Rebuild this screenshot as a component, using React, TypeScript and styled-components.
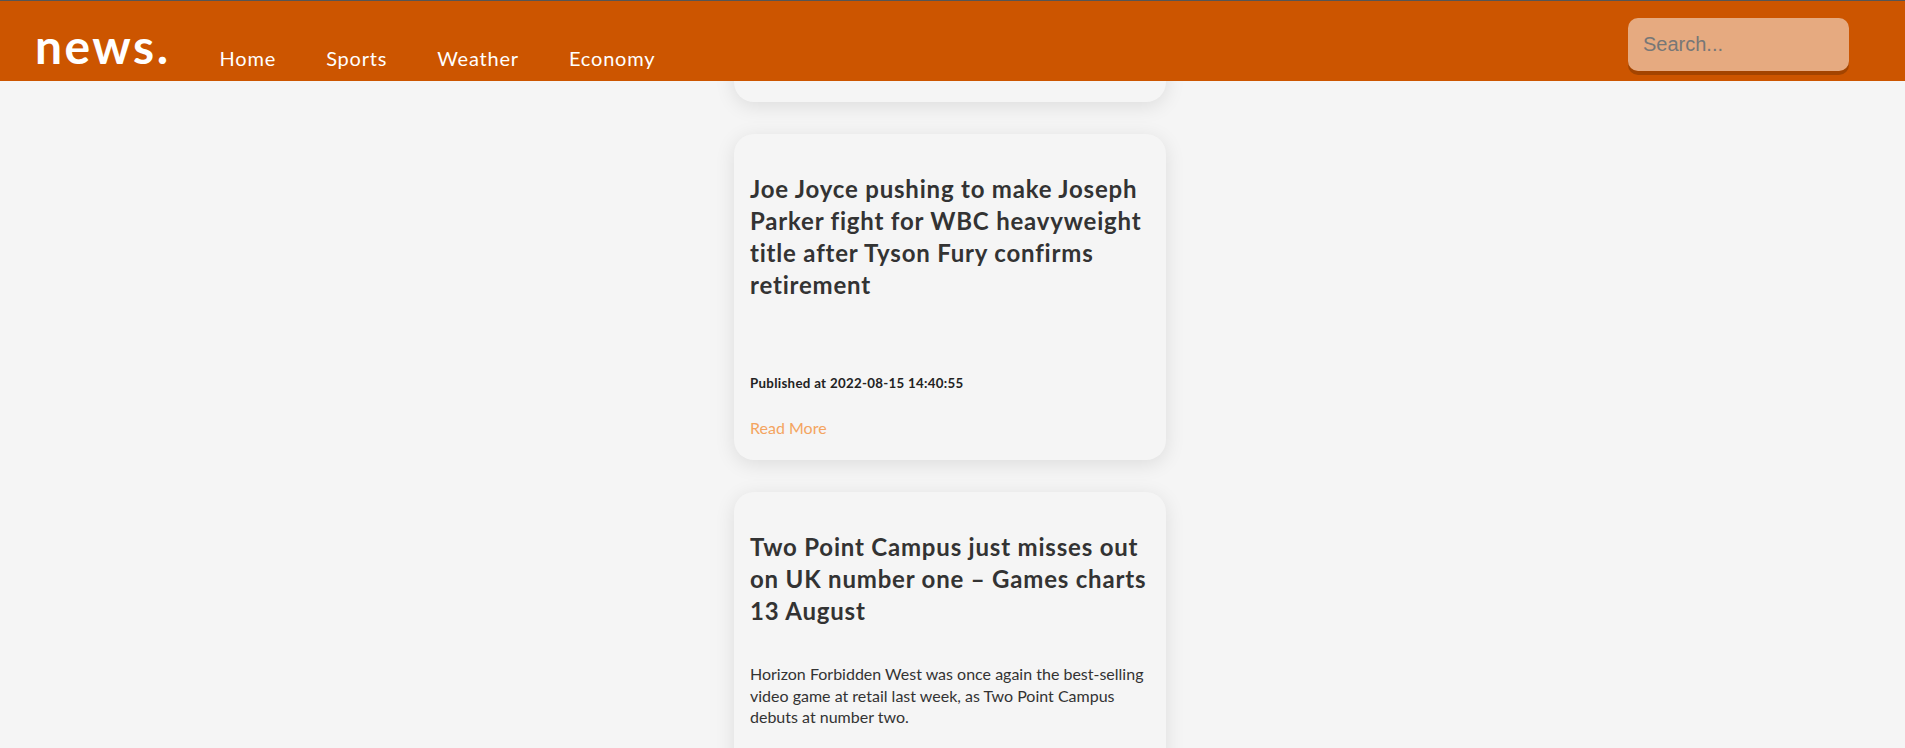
import { useLayoutEffect, useRef } from "react";
import styled, { createGlobalStyle } from "styled-components";

type Article = {
  title: string;
  description: string;
  publishedAt: string;
};

const articles: Article[] = [
  {
    title: "Ethereum developers confirm date for the long awaited Merge upgrade",
    description: "",
    publishedAt: "2022-08-15 15:02:11",
  },
  {
    title:
      "Joe Joyce pushing to make Joseph Parker fight for WBC heavyweight title after Tyson Fury confirms retirement",
    description: "",
    publishedAt: "2022-08-15 14:40:55",
  },
  {
    title: "Two Point Campus just misses out on UK number one – Games charts 13 August",
    description:
      "Horizon Forbidden West was once again the best-selling video game at retail last week, as Two Point Campus debuts at number two.",
    publishedAt: "2022-08-15 14:00:00",
  },
  {
    title: "Heatwave ends as thunderstorms and flash flooding hit parts of England",
    description: "Met Office yellow warnings remain in place for much of the south.",
    publishedAt: "2022-08-15 13:21:09",
  },
];

const App = () => {
  const secondCard = useRef<HTMLElement>(null);

  // the reference is scrolled so the second card sits at y=134
  useLayoutEffect(() => {
    if (!secondCard.current) return;
    const top = secondCard.current.getBoundingClientRect().top + window.scrollY;
    window.scrollTo(0, top - 134);
  }, []);

  return (
    <>
      <GlobalStyle />
      <Header>
        <Brand>
          <Logo href="#">news.</Logo>
          <NavLink href="#">Home</NavLink>
          <NavLink href="#">Sports</NavLink>
          <NavLink href="#">Weather</NavLink>
          <NavLink href="#">Economy</NavLink>
        </Brand>
        <Search type="text" placeholder="Search..." />
      </Header>

      <Feed>
        {articles.map((a, i) => (
          <Card key={a.title} ref={i === 1 ? secondCard : undefined}>
            <Title>{a.title}</Title>
            <Summary>{a.description}</Summary>
            <Published>Published at {a.publishedAt}</Published>
            <ReadMore href="#">Read More</ReadMore>
          </Card>
        ))}
      </Feed>
    </>
  );
};

const GlobalStyle = createGlobalStyle`
  html, body {
    margin: 0;
    padding: 0;
  }
  body {
    background: #f5f5f5;
    font-family: Lato, "Open Sans", sans-serif;
    color: #333;
  }
`;

const Header = styled.header`
  position: fixed;
  top: 0;
  left: 0;
  right: 0;
  z-index: 10;
  height: 80px;
  border-top: 1px solid #555;
  background: #cc5500;
  display: flex;
  justify-content: space-between;
  padding: 0 56px 0 35px;
`;

const Brand = styled.nav`
  display: flex;
  align-items: flex-end;
  padding-bottom: 11.5px;
`;

const Logo = styled.a`
  font-size: 48px;
  line-height: 48px;
  font-weight: 700;
  letter-spacing: 2.5px;
  color: #fff;
  text-decoration: none;
  margin-right: 24px;
`;

const NavLink = styled.a`
  font-size: 20px;
  line-height: 24px;
  color: #fff;
  text-decoration: none;
  padding: 0 25px;
  letter-spacing: 0.8px;
`;

const Search = styled.input`
  align-self: flex-start;
  margin-top: 17px;
  width: 221px;
  height: 53px;
  box-sizing: border-box;
  padding: 0 15px;
  border: none;
  border-radius: 10px;
  background: rgba(255, 255, 255, 0.5);
  box-shadow: 0 4px 0 rgba(0, 0, 0, 0.2);
  font: 20px "Liberation Sans", Arial, sans-serif;
  color: #333;
  outline: none;
  &::placeholder {
    color: #777;
  }
`;

const Feed = styled.main`
  display: flex;
  flex-direction: column;
  align-items: center;
  padding: 113px 5px 32px 0;
`;

const Card = styled.article`
  width: 400px;
  padding: 16px;
  margin-bottom: 32px;
  background: #f5f5f5;
  border-radius: 20px;
  box-shadow: 0 4px 20px rgba(0, 0, 0, 0.1);
  display: flex;
  flex-direction: column;
`;

const Title = styled.h2`
  margin: 23px 0 20px;
  font-size: 24px;
  line-height: 32px;
  font-weight: 700;
  letter-spacing: 0.8px;
  color: #333;
`;

const Summary = styled.p`
  margin: 16px 0;
  font-size: 16px;
  line-height: 21.3px;
  color: #333;
`;

const Published = styled.h5`
  margin: 22px 0;
  font-size: 13.3px;
  line-height: 17.7px;
  font-weight: 700;
  letter-spacing: 0.3px;
  color: #222;
`;

const ReadMore = styled.a`
  align-self: flex-start;
  padding: 3px 0 6px;
  font-size: 16px;
  line-height: 21px;
  color: #f4a460;
  text-decoration: none;
`;

export default App;
